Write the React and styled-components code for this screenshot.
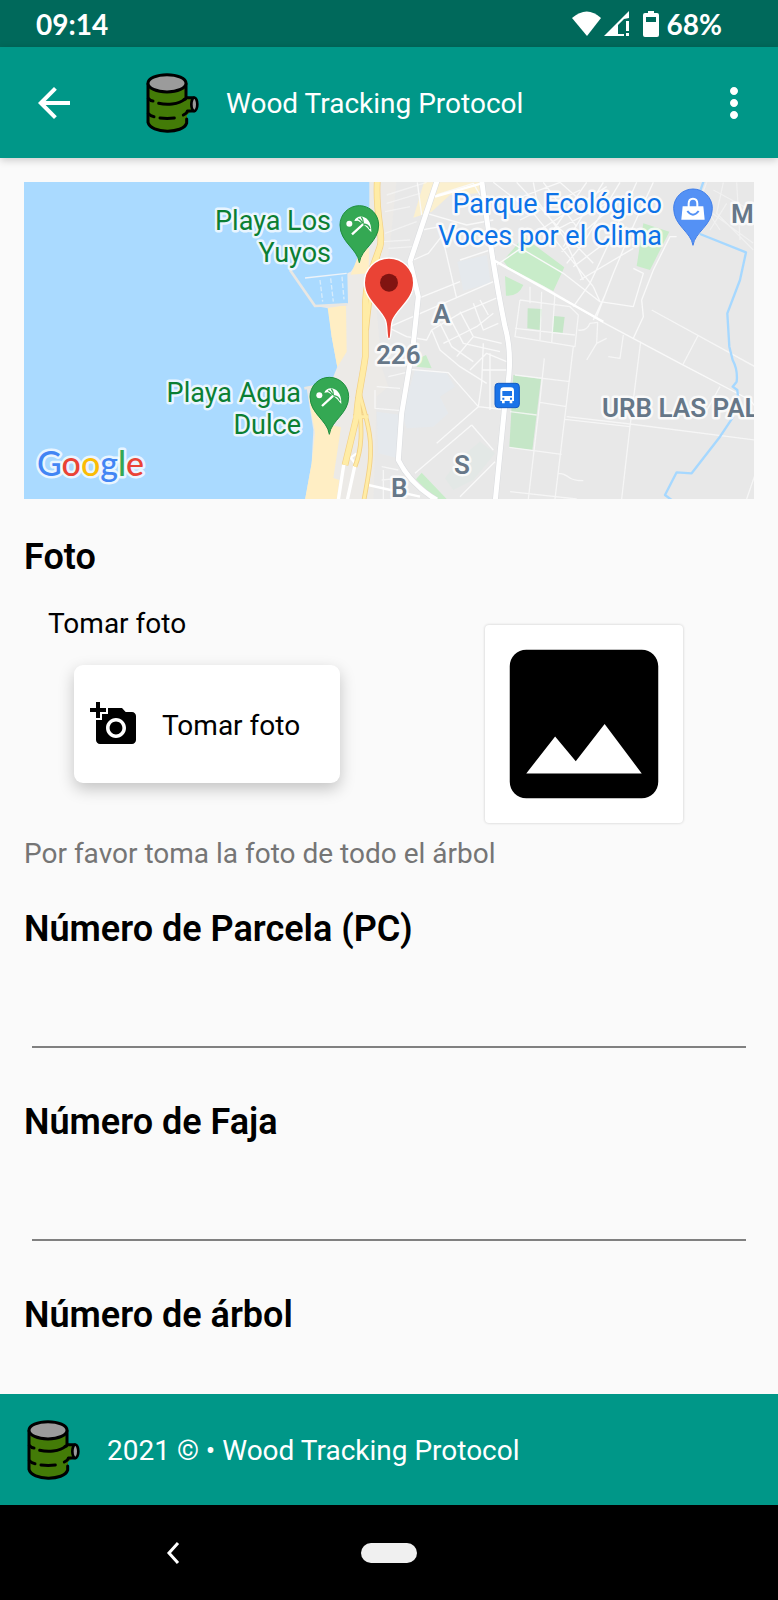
import React, { useState } from "react";
import styled, { createGlobalStyle } from "styled-components";
import { MdAddAPhoto, MdArrowBack, MdMoreVert, MdPhoto } from "react-icons/md";

const color = {
  primary: "#009788",
  primaryDark: "#00695b",
  background: "#fafafa",
  hint: "#757575",
  line: "#808080",
};

// css styling

const GlobalStyle = createGlobalStyle`
  *, *::before, *::after {
    box-sizing: border-box;
  }
  body {
    margin: 0;
    background-color: ${color.background};
    color: #000;
    font-family: Roboto, "Liberation Sans", sans-serif;
    font-size: 28px;
    line-height: 38px;
  }
  button {
    padding: 0;
    border: none;
    background: none;
    color: inherit;
    font: inherit;
    cursor: pointer;
  }
  svg {
    display: block;
    flex-shrink: 0;
  }
`;

const Screen = styled.div`
  display: flex;
  flex-direction: column;
  height: 100vh;
`;

const StatusBar = styled.div`
  display: flex;
  align-items: center;
  justify-content: space-between;
  flex-shrink: 0;
  height: 47px;
  padding: 0 56px 0 36px;
  background-color: ${color.primaryDark};
  color: #fff;
  font-family: Lato, sans-serif;
  font-weight: 700;
`;

const StatusIcons = styled.div`
  display: flex;
  align-items: center;
  gap: 8px;
`;

const Header = styled.header`
  display: flex;
  align-items: center;
  flex-shrink: 0;
  height: 111px;
  padding: 0 20px 0 30px;
  background-color: ${color.primary};
  color: #fff;
  box-shadow: 0 2px 8px rgba(0, 0, 0, 0.2);
  z-index: 1;
`;

const IconButton = styled.button`
  width: 48px;
  height: 48px;
`;

const Brand = styled.div`
  display: flex;
  align-items: center;
  flex: 1;
  gap: 27px;
  padding-left: ${props => props.$inset || 0}px;
`;

const BrandName = styled.span`
  padding-top: 3px;
`;

const Content = styled.main`
  flex: 1;
  min-height: 0;
  padding: 24px 24px 0;
  overflow-y: auto;
  scrollbar-width: none;
`;

const MapView = styled.svg`
  width: 100%;
  height: 317px;
`;

const MapLabel = styled.text`
  fill: ${props => props.$fill || "#667788"};
  stroke: #fff;
  stroke-opacity: 0.75;
  stroke-width: 5px;
  stroke-linejoin: round;
  paint-order: stroke;
  font-size: ${props => (props.$fill ? 27 : 26)}px;
  font-weight: ${props => (props.$fill ? 400 : 600)};
`;

const GoogleLabel = styled(MapLabel)`
  font-family: Lato, sans-serif;
  font-size: 34px;
  font-weight: 500;
`;

const Title = styled.h2`
  margin: 0;
  font-size: 36px;
  font-weight: 600;
  line-height: 44px;
`;

const PhotoSection = styled.section`
  padding-top: 36px;
`;

const PhotoRow = styled.div`
  display: grid;
  grid-template-columns: 1fr 1fr;
  padding-top: 26px;
`;

const PhotoColumn = styled.div`
  padding: 0 24px;
`;

const PhotoButton = styled.button`
  display: flex;
  align-items: center;
  gap: 24px;
  width: 266px;
  height: 118px;
  margin: 22px 26px 0;
  padding: 0 16px;
  border-radius: 9px;
  background-color: #fff;
  box-shadow: 0 6px 16px rgba(0, 0, 0, 0.22);
`;

const ButtonLabel = styled.span`
  padding-top: 3px;
`;

const Preview = styled.div`
  justify-self: center;
  margin-top: 20px;
  margin-right: -24px;
  border-radius: 4px;
  background-color: #fff;
  box-shadow: 0 0 3px rgba(0, 0, 0, 0.2);
`;

const Hint = styled.p`
  margin: 12px 0 0;
  color: ${color.hint};
`;

const FieldWrap = styled.div`
  height: 193px;
  padding-top: 34px;
`;

const FieldInput = styled.input`
  display: block;
  width: calc(100% - 16px);
  height: 84px;
  margin: 13px 8px 0;
  padding: 0;
  border: none;
  border-bottom: 2px solid ${color.line};
  outline: none;
  background: none;
  font: inherit;
`;

const Footer = styled.footer`
  display: flex;
  align-items: center;
  flex-shrink: 0;
  height: 111px;
  background-color: ${color.primary};
  color: #fff;
`;

const NavBar = styled.nav`
  display: grid;
  grid-template-columns: 1fr 56px 1fr;
  align-items: center;
  flex-shrink: 0;
  height: 95px;
  background-color: #000;
`;

const NavBack = styled.button`
  display: flex;
  justify-content: center;
  padding-right: 16px;
`;

const NavHome = styled.button`
  height: 20px;
  border-radius: 10px;
  background-color: #f0f0f0;
`;

const LogIcon = () => (
  <svg width="53" height="60" viewBox="0 0 159 180" fill="none" stroke="#000" strokeWidth="9" strokeLinecap="round">
    <path fill="#437b07" stroke="none" d="M6 32v118c10 32 106 32 117 0v-24l18-14V74l-18-4V32z" />
    <path d="M6 32v116c8 34 106 36 116 2v-12" />
    <path d="M120 32v42q0 4-5 6M123 74h20M144 114h-20q0 6-12 12" strokeLinejoin="round" />
    <path d="M116 78c-18 18-56 18-78 13M7 76c4 5 8 8 14 8M7 122c4 5 10 8 17 9M42 135c15 2 28 2 43 0" />
    <ellipse cx="63" cy="31" rx="57" ry="26" fill="#9b9b9b" />
    <ellipse cx="145" cy="94" rx="9" ry="20" fill="#9b9b9b" strokeWidth="8" />
  </svg>
);

// wifi fan and mobile signal sit close together
const NetworkIcon = () => (
  <svg width="57" height="26" viewBox="0 0 57 26" fill="#fff">
    <path d="M0 7Q15-6 29 7L15 25z" />
    <path d="M32 25 57 0v7l-5 1-6 6v9h6v2zM54 10h3v10h-3zM54 22h3v3h-3z" />
  </svg>
);

const BatteryIcon = () => (
  <svg width="22" height="26" viewBox="-6 0 22 26">
    <path fill="#fff" d="M5 0h6v2h3q2 0 2 2v20q0 2-2 2H2q-2 0-2-2V4q0-2 2-2h3z" />
    <path fill={color.primaryDark} d="M3 6h10v5H3z" />
  </svg>
);

const BeachPin = ({ x, y }) => (
  <g transform={`translate(${x} ${y})`}>
    <path fill="#34a853" stroke="#1e8e3e" strokeWidth="3" d="M0 113C-6 70-58 52-58 0a58 58 0 0 1 116 0C58 52 6 70 0 113z" />
    <circle cx="-30" cy="-4" r="9" fill="#fff" />
    <path d="M-22 28 12-3" stroke="#fff" strokeWidth="7" />
    <path fill="#fff" d="M-15-12C-8-34 38-32 36 22Q30 16 24 8L10-4-4-13z" />
    <path d="M10-5Q4-16-3-19M12-3Q28-2 32 12M12-5Q12-18 6-24" stroke="#34a853" strokeWidth="4" fill="none" />
  </g>
);

const GOOGLE = [
  ["G", "#4285f4"],
  ["o", "#ea4335"],
  ["o", "#fbbc04"],
  ["g", "#4285f4"],
  ["l", "#34a853"],
  ["e", "#ea4335"],
];

// The land, the roads and the pins are drawn at three times the label scale.
const Map = () => (
  <MapView viewBox="0 0 730 317" preserveAspectRatio="xMidYMid slice" role="img" aria-label="Mapa">
    <rect width="730" height="317" fill="#e8e8e8" />
    <g transform="scale(0.33333) translate(708 -36)" fill="none" strokeLinejoin="round">
      <path fill="#eceae7" d="M320 30h90l-20 200-40 190 15 170 20 60-35 30-10 320H120z" />
      <path fill="#aadaff" d="M-710 30H328V110L328 230 272 305 262 310 264 400 165 408 205 415 215 500 232 590 220 620 140 655 160 780 155 880 135 990H-710z" />
      <path fill="#ffeec4" d="M300 245 328 232 325 310 272 314zM203 414 258 405 260 545 232 592 215 500zM146 680 165 790 155 880 135 990H230L238 930 220 924 243 772 190 760z" />
      <path stroke="#e9e7e3" strokeWidth="8" d="M90 300 165 408 262 403M133 655 160 650" />
      <path stroke="#eef3f8" strokeWidth="4" d="M135 324 260 310" />
      <path stroke="#d8ecfb" strokeWidth="4" strokeDasharray="14 6" d="M180 330 188 395M212 325 220 395M246 320 252 388" />

      <path fill="#e5e9ed" d="M592 275 680 255 692 340 610 362zM465 600 560 610 585 650 540 680 565 730 520 770 440 775 425 730zM350 725 425 735 415 865 355 850zM750 80 800 60 830 130 770 150z" />
      <path fill="#e3e8e6" d="M600 865 660 815 705 850 640 930 580 960 555 925z" />
      <path fill="#fbf0cf" d="M492 37H670L655 70 570 75 515 125 460 143z" />
      <path fill="#c8ecc9" d="M478 565 498 555 515 595 470 590zM485 908 560 987H525L468 928zM730 272 770 225 790 200 913 292 880 363 750 300zM735 318 790 345Q775 380 738 377zM1150 160 1228 185 1170 300 1130 288z" />
      <path fill="#c5e6c7" d="M803 415 846 417 840 480 802 475zM882 438 914 441 908 490 878 486zM760 615 843 627 817 840 748 832z" />

      <g stroke="#f9f9f9" strokeWidth="4">
        <path d="M380 75 500 37M380 100 480 70M375 125 450 110M375 190 470 155M370 215 450 210M385 235 460 230" opacity=".6" />
        <path d="M472 37 485 135M530 75 640 40 660 75M500 130 620 165 700 150M485 180 540 170 590 385M460 270 505 250 560 180M475 385 600 335M390 470 700 335M600 270 690 240" />
        <path d="M390 475 440 500 500 510 515 480 600 430 720 380M515 480 540 540 600 590 680 640M540 460 575 530 640 575M570 445 610 520 720 545M600 425 640 500 725 520M640 400 670 480 715 460M550 520 600 495 650 470 700 430M590 560 640 500M660 390 685 435M630 600 680 550 740 575M670 520 665 640 655 710 740 720M665 600H740M690 550V720M450 598 565 608 655 710M655 710 530 820M635 765 700 840M465 910 635 765M600 980 705 875" />
        <path d="M350 650 420 655M385 620 450 605M345 660V715L425 722M365 890 415 900M365 930 415 925M370 900V987" opacity=".8" />
        <path d="M700 270 850 350 1025 455 1260 580 1470 690 1490 715M740 210 910 310 1020 395M710 285 790 230M700 37 820 130 1000 350M770 37 870 145 1000 280M820 37 830 90 910 200 970 330M850 37 950 170M900 37 1000 125M760 90 900 37M780 150 960 60M840 180 1040 50M850 200 1060 90M905 245 1080 90M940 290 1100 170M960 330 1120 235M1180 37 1110 190 1060 310 1010 440M1130 37 1070 170 990 340 940 410M1080 37 970 220 920 280M1030 37 910 230M980 37 880 180M1000 350 1020 395 1120 410 1150 310 1120 295M1250 200 1230 200 1180 300 1145 390 1150 440 1120 505M1035 375 1000 450" />
        <path d="M780 390 930 410 955 435 945 530 765 500 780 390M810 350V400M765 475 945 495M845 365 840 510M885 370 875 520M955 480Q980 485 990 460L1013 457 1010 520 980 570M1090 495 1080 565 1045 560M1010 520 1040 505M940 530 905 820 885 987M853 565 840 690 805 987M765 615 930 635M840 697 920 710M750 725 830 735M748 832 905 853M920 740 1110 762 1485 810M915 748 1110 770M1142 515 1110 770 1085 987M1175 420 1485 590M1315 495 1268 585M1380 650 1330 740M1490 900 1460 987M895 910C930 910 915 932 970 932M750 965 950 987" opacity=".8" />
        <path d="M1340 37 1320 90 1380 180M1390 37 1370 130 1480 240M1430 37 1440 210M1330 110 1480 220M1360 60 1490 130M1350 180 1400 100" opacity=".5" />
      </g>

      <g stroke="#d9dbde" strokeWidth="18">
        <path d="M532 30 450 275 475 380 460 520 425 730 415 870C440 920 480 960 530 990" />
        <path d="M665 30C680 150 700 300 735 470 760 560 745 640 735 700L706 990" />
      </g>
      <g stroke="#fff" strokeWidth="15">
        <path d="M532 30 450 275 475 380 460 520 425 730 415 870C440 920 480 960 530 990" />
        <path d="M665 30C680 150 700 300 735 470 760 560 745 640 735 700L706 990" />
        <path strokeWidth="7" d="M525 80 665 40M325 945 480 980M700 270 1030 455M255 875 290 850M262 850 285 880" />
        <path strokeWidth="10" d="M252 880 235 990M285 885 262 990" />
      </g>
      <g stroke="#f3d084" strokeWidth="20">
        <path d="M352 30C345 140 372 190 360 230 340 290 318 330 316 400V560C305 640 292 680 290 740L255 885" />
        <path strokeWidth="14" d="M360 230C345 300 335 330 320 480M296 660C305 700 320 740 328 790 340 860 322 930 312 990M293 680C310 780 305 840 285 890M280 740 325 740" />
      </g>
      <g stroke="#ffeca6" strokeWidth="16">
        <path d="M352 30C345 140 372 190 360 230 340 290 318 330 316 400V560C305 640 292 680 290 740L255 885" />
        <path strokeWidth="9" d="M360 230C345 300 335 330 320 480M296 660C305 700 320 740 328 790 340 860 322 930 312 990M293 680C310 780 305 840 285 890M280 740 325 740" />
      </g>

      <path stroke="#a6d8ff" strokeWidth="7" d="M1332 30 1320 65M1320 192 1458 247 1440 330 1402 430 1408 530 1418 570Q1434 600 1430 635L1418 650 1432 660 1434 680M1420 740 1380 800 1295 910 1250 907 1215 975 1235 990" />
    </g>

    <MapLabel textAnchor="end" x="307" y="48" $fill="#0b7f33">Playa Los</MapLabel>
    <MapLabel textAnchor="end" x="307" y="80" $fill="#0b7f33">Yuyos</MapLabel>
    <MapLabel textAnchor="end" x="277" y="220" $fill="#0b7f33">Playa Agua</MapLabel>
    <MapLabel textAnchor="end" x="277" y="252" $fill="#0b7f33">Dulce</MapLabel>
    <MapLabel textAnchor="end" x="638" y="31" $fill="#0c73e8">Parque Ecológico</MapLabel>
    <MapLabel textAnchor="end" x="638" y="63" $fill="#0c73e8">Voces por el Clima</MapLabel>
    <MapLabel x="707" y="41">M</MapLabel>
    <MapLabel x="578" y="235">URB LAS PAL</MapLabel>
    <MapLabel x="409" y="141">A</MapLabel>
    <MapLabel x="352" y="182">226</MapLabel>
    <MapLabel x="430" y="292">S</MapLabel>
    <MapLabel x="367" y="315">B</MapLabel>
    <GoogleLabel x="13" y="294">
      {GOOGLE.map(([letter, fill], i) => (
        <tspan key={i} fill={fill}>{letter}</tspan>
      ))}
    </GoogleLabel>

    <g transform="scale(0.33333) translate(708 -36)">
      <BeachPin x={298} y={165} />
      <BeachPin x={208} y={680} />
      <path fill="#ea4335" stroke="#fff" strokeWidth="4" d="M387 507C378 507 384 470 376 450 362 415 313 390 313 338a74 74 0 0 1 148 0C461 390 412 415 398 450 390 470 396 507 387 507z" />
      <circle cx="387" cy="338" r="27" fill="#811411" />
      <rect x="705" y="640" width="73" height="73" rx="10" fill="#1a73e8" stroke="#1259c3" strokeWidth="3" />
      <path fill="#fff" d="M721 662q0-10 10-10h21q10 0 10 10v31h-5v7h-8v-7h-15v7h-8v-7h-5z" />
      <path fill="#1a73e8" d="M727 663h29v15h-29zM727 683h6v6h-6zM750 683h6v6h-6z" />
      <g transform="translate(1299 115)">
        <path fill="#5491f5" stroke="#3f7de8" strokeWidth="3" d="M0 111C-6 70-58 52-58 0a58 58 0 0 1 116 0C58 52 6 70 0 111z" />
        <path fill="#fff" d="M-31-6h62l4 40h-70z" />
        <path fill="none" stroke="#fff" strokeWidth="6" d="M-13-4v-10q0-15 13-15t13 15v10" />
        <path fill="none" stroke="#5491f5" strokeWidth="6" d="M-17 8q17 22 34 0" />
      </g>
    </g>
  </MapView>
);

const Field = ({ name, label }) => {
  const [value, setValue] = useState("");

  return (
    <FieldWrap>
      <Title as="label" htmlFor={name}>{label}</Title>
      <FieldInput id={name} name={name} value={value} onChange={e => setValue(e.target.value)} />
    </FieldWrap>
  );
};

const App = () => (
  <Screen>
    <GlobalStyle />
    <StatusBar>
      <span>09:14</span>
      <StatusIcons>
        <NetworkIcon />
        <BatteryIcon />
        <span>68%</span>
      </StatusIcons>
    </StatusBar>
    <Header>
      <IconButton aria-label="Atrás"><MdArrowBack size={48} /></IconButton>
      <Brand $inset={68}>
        <LogIcon />
        <BrandName>Wood Tracking Protocol</BrandName>
      </Brand>
      <IconButton aria-label="Más opciones"><MdMoreVert size={48} /></IconButton>
    </Header>
    <Content>
      <Map />
      <PhotoSection>
        <Title>Foto</Title>
        <PhotoRow>
          <PhotoColumn>
            <span>Tomar foto</span>
            <PhotoButton>
              <MdAddAPhoto size={48} />
              <ButtonLabel>Tomar foto</ButtonLabel>
            </PhotoButton>
          </PhotoColumn>
          <Preview><MdPhoto size={198} /></Preview>
        </PhotoRow>
        <Hint>Por favor toma la foto de todo el árbol</Hint>
      </PhotoSection>
      <Field name="parcela" label="Número de Parcela (PC)" />
      <Field name="faja" label="Número de Faja" />
      <Field name="arbol" label="Número de árbol" />
    </Content>
    <Footer>
      <Brand $inset={27}>
        <LogIcon />
        <BrandName>2021 © • Wood Tracking Protocol</BrandName>
      </Brand>
    </Footer>
    <NavBar>
      <NavBack aria-label="Volver">
        <svg width="14" height="22" viewBox="0 0 14 22" fill="none" stroke="#fff" strokeWidth="3">
          <path d="M12 1 3 11l9 10" />
        </svg>
      </NavBack>
      <NavHome aria-label="Inicio" />
    </NavBar>
  </Screen>
);

export default App;
